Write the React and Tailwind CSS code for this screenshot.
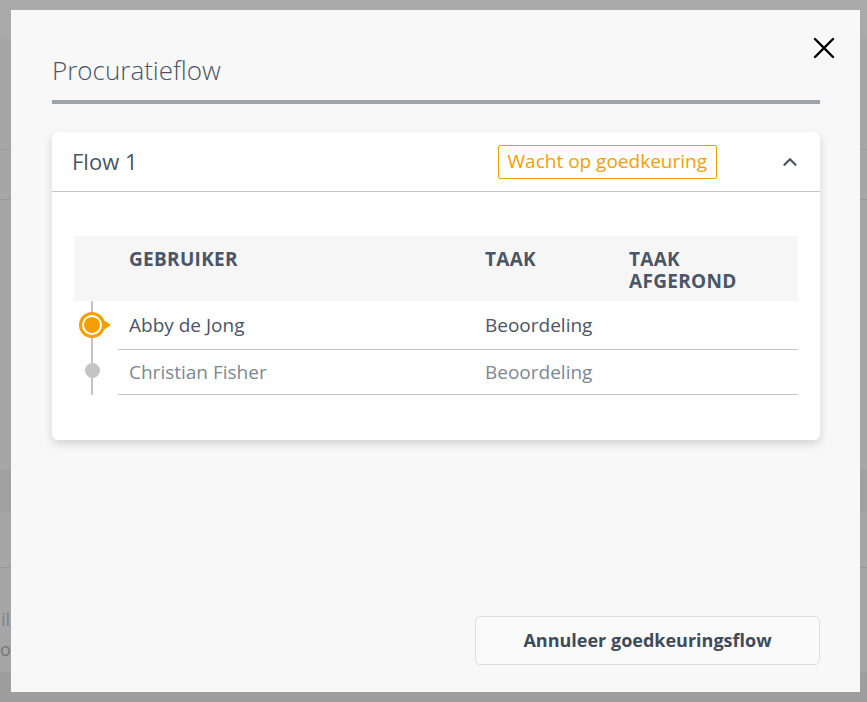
import { X, ChevronUp } from "lucide-react";

const rows = [
  { name: "Abby de Jong", task: "Beoordeling", active: true },
  { name: "Christian Fisher", task: "Beoordeling", active: false },
];

function ActiveMarker() {
  return (
    <svg width="36" height="28" viewBox="0 0 36 28" className="absolute left-[4px] top-[10px]">
      <path d="M24 8 L33 14 L24 20 Z" fill="#f59e00" />
      <circle cx="14" cy="14" r="11.5" fill="#ffffff" stroke="#f59e00" strokeWidth="3" />
      <circle cx="14" cy="14" r="8" fill="#f59e00" />
    </svg>
  );
}

function Row({ row, height }) {
  return (
    <div className="flex" style={{ height }}>
      <div className="relative w-[44px] shrink-0">
        <div className="absolute left-[17px] top-0 bottom-0 w-[2px] bg-[#c4c4c4]" />
        {row.active ? (
          <ActiveMarker />
        ) : (
          <div className="absolute left-[11px] top-[13px] w-[15px] h-[15px] rounded-full bg-[#c4c4c4]" />
        )}
      </div>
      <div
        className={
          "flex-1 grid grid-cols-[356px_144px_1fr] items-center border-b border-[#c6c6c6] text-[19px] " +
          (row.active ? "text-[#4a5566]" : "text-[#7d8794]")
        }
      >
        <div className="pl-[11px]">{row.name}</div>
        <div className="pl-[11px]">{row.task}</div>
        <div className="pl-[11px]"></div>
      </div>
    </div>
  );
}

export default function App() {
  return (
    <div className="relative h-[702px] w-[867px] overflow-hidden bg-[#a3a3a3]" style={{ fontFamily: "'Open Sans', 'Noto Sans', sans-serif" }}>
      {/* page behind the overlay */}
      <div className="flex flex-col">
        <div className="h-[38px] bg-[#aaaaaa]" />
        <div className="h-[112px] bg-[#a6a6a6] border-b border-[#9a9a9a]" />
        <div className="h-[50px] bg-[#a6a6a6] border-b border-[#9a9a9a]" />
        <div className="h-[270px] bg-[#a6a6a6]" />
        <div className="h-[42px] bg-[#a0a0a0]" />
        <div className="h-[56px] bg-[#a6a6a6] border-b border-[#9a9a9a]" />
        <div className="h-[104px] bg-[#a6a6a6] pt-[36px] text-[18px] leading-[30px]">
          <div className="pl-[1px] text-[#72899a]">il</div>
          <div className="text-[#777777]">o</div>
        </div>
        <div className="h-[30px] bg-[#9e9e9e]" />
      </div>

      {/* modal */}
      <div className="absolute left-[11px] top-[10px] w-[849px] h-[682px] bg-[#f8f8f8] flex flex-col pl-[41px] pr-[40px] pt-[45px] pb-[27px]">
        <button className="absolute right-[18px] top-[20px] text-black">
          <X size={36} strokeWidth={1.6} />
        </button>
        <h1 className="text-[26px] font-light leading-[30px] text-[#4a5566]">Procuratieflow</h1>
        <div className="mt-[15px] h-[4px] bg-[#9da3ab]" />

        <div className="mt-[28px] bg-white rounded-[6px] shadow-[0_4px_10px_rgba(0,0,0,0.15)]">
          <div className="flex items-center h-[60px] border-b border-[#c6c6c6] pl-[20px]">
            <div className="flex-1 text-[22px] text-[#4a5566]">Flow 1</div>
            <div className="h-[34px] flex items-center px-[9px] border border-[#f59e00] rounded-[2px] text-[19px] text-[#f59e00]">
              Wacht op goedkeuring
            </div>
            <ChevronUp size={22} strokeWidth={2.5} className="ml-[62px] mr-[19px] text-[#4a5566]" />
          </div>

          <div className="pt-[44px] pb-[45px] px-[22px]">
            <div className="flex h-[65px] bg-[#f6f6f6] text-[19px] font-bold uppercase text-[#4a5566] leading-[22px] tracking-[0.3px]">
              <div className="w-[44px] shrink-0" />
              <div className="flex-1 grid grid-cols-[356px_144px_1fr] pt-[12px]">
                <div className="pl-[11px]">Gebruiker</div>
                <div className="pl-[11px]">Taak</div>
                <div className="pl-[11px]">
                  Taak
                  <br />
                  afgerond
                </div>
              </div>
            </div>
            <Row row={rows[0]} height={49} />
            <Row row={rows[1]} height={45} />
          </div>
        </div>

        <div className="mt-auto flex justify-end">
          <button className="w-[345px] h-[49px] rounded-[5px] border border-[#dcdfe6] bg-[#fafafa] text-[18px] font-bold text-[#3f4b5b]">
            Annuleer goedkeuringsflow
          </button>
        </div>
      </div>
    </div>
  );
}
